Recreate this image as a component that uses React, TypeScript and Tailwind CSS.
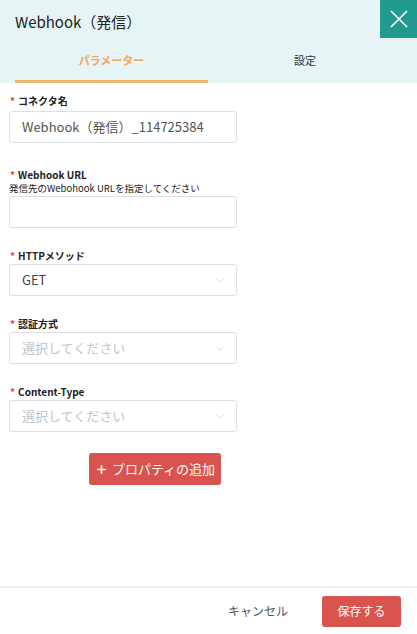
import { ChevronDown, X, Plus } from 'lucide-react';

const font = { fontFamily: '"Noto Sans CJK JP", "Liberation Sans", sans-serif' };

function Label({ text }: { text: string }) {
  return (
    <div className="h-[14px] flex items-center text-[10px] font-bold text-[#222] leading-[14px]">
      <span className="text-[#e0443e] mr-[3px]">*</span>
      {text}
    </div>
  );
}

function Select({ value, placeholder }: { value?: string; placeholder?: string }) {
  return (
    <div className="w-[228px] h-[32px] border border-[#dcdfe6] rounded-[3px] flex items-center justify-between pl-[12px] pr-[9px] bg-white">
      <span className={value ? 'text-[13px] text-[#444]' : 'text-[13px] text-[#c0c4cc]'}>{value ?? placeholder}</span>
      <ChevronDown size={13} strokeWidth={1.2} className="text-[#c0c4cc]" />
    </div>
  );
}

export default function App() {
  return (
    <div className="w-[417px] h-[634px] bg-white flex flex-col" style={font}>
      <div className="bg-[#e6f4f5] h-[83px] flex flex-col">
        <div className="flex justify-between h-[45px]">
          <div className="pl-[15px] pt-[11px] text-[15px] text-[#222]">Webhook（発信）</div>
          <div className="w-[37px] h-[38px] bg-[#1f9a8d] flex items-center justify-center">
            <X size={30} strokeWidth={1.4} className="text-white" />
          </div>
        </div>
        <div className="flex px-[15px] h-[38px]">
          <div className="w-[193px] flex flex-col items-center">
            <div className="flex-1 flex items-center text-[11px] font-bold text-[#f2a65a] pb-[5px]">パラメーター</div>
            <div className="w-full h-[3px] bg-[#ecb673]" />
          </div>
          <div className="flex-1 flex items-center justify-center text-[11px] text-[#333] pb-[8px]">設定</div>
        </div>
      </div>

      <div className="flex-1 px-[9px] pt-[11px] flex flex-col">
        <div className="pl-[1px] mb-[3px]"><Label text="コネクタ名" /></div>
        <div className="w-[228px] h-[32px] border border-[#dcdfe6] rounded-[3px] flex items-center pl-[12px] text-[13px] text-[#555]">
          Webhook（発信）_114725384
        </div>

        <div className="mt-[25px] pl-[1px]"><Label text="Webhook URL" /></div>
        <div className="h-[12px] flex items-center text-[9.5px] text-[#222] leading-[12px] mb-[2px]">発信先のWebohook URLを指定してください</div>
        <div className="w-[228px] h-[32px] border border-[#dcdfe6] rounded-[3px]" />

        <div className="mt-[21px] pl-[1px] mb-[1px]"><Label text="HTTPメソッド" /></div>
        <Select value="GET" />

        <div className="mt-[21px] pl-[1px] mb-[1px]"><Label text="認証方式" /></div>
        <Select placeholder="選択してください" />

        <div className="mt-[21px] pl-[1px] mb-[1px]"><Label text="Content-Type" /></div>
        <Select placeholder="選択してください" />

        <div className="mt-[21px] ml-[80px] w-[132px] h-[32px] bg-[#d9534f] rounded-[3px] flex items-center justify-center gap-[4px] text-white text-[13px]">
          <Plus size={13} strokeWidth={3} />
          プロパティの追加
        </div>
      </div>

      <div className="border-t-2 border-[#eeeeee] h-[48px] flex items-center justify-end pr-[16px]">
        <div className="text-[12px] text-[#555] mr-[34px]">キャンセル</div>
        <div className="w-[79px] h-[31px] bg-[#d9534f] rounded-[3px] flex items-center justify-center text-white text-[12px]">保存する</div>
      </div>
    </div>
  );
}
